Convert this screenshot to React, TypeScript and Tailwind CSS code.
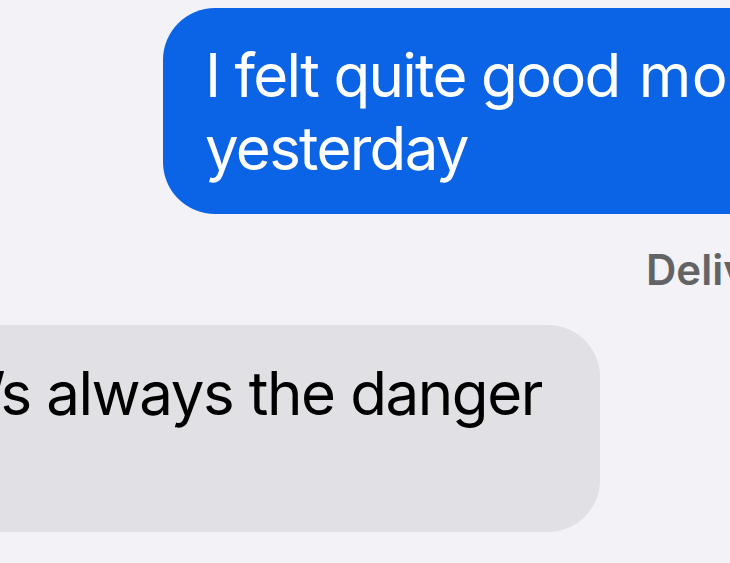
export default function App() {
  return (
    <div
      className="relative h-[563px] w-[730px] overflow-hidden bg-[#f2f2f7]"
      style={{ fontFamily: 'Inter, "Noto Sans", sans-serif' }}
    >
      {/* sent bubble */}
      <div className="ml-[163px] mt-[8px] h-[206px] w-[640px] rounded-[52px] bg-[#0b63e5] pl-[42px] pt-[31px] text-[60px] leading-[73px] tracking-[-1.7px] text-white">
        <div className="whitespace-nowrap">
          I felt quite good <span className="ml-[4px] tracking-[0.5px]">mostly</span>
        </div>
        <div className="whitespace-nowrap">yesterday</div>
      </div>

      {/* read receipt */}
      <div className="mt-[31px] whitespace-nowrap pl-[646px] text-[42px] font-semibold leading-[50px] text-[#636366]">
        Delivered
      </div>

      {/* received bubble */}
      <div className="ml-[-420px] mt-[30px] h-[207px] w-[1020px] rounded-[52px] bg-[#e0e0e5] pr-[58px] pt-[32px] text-[60px] leading-[73px] tracking-[-1.4px] text-black">
        <div className="whitespace-nowrap text-right">Yeah, there’s always the danger</div>
        <div className="whitespace-nowrap pl-[42px]">of that</div>
      </div>
    </div>
  )
}
